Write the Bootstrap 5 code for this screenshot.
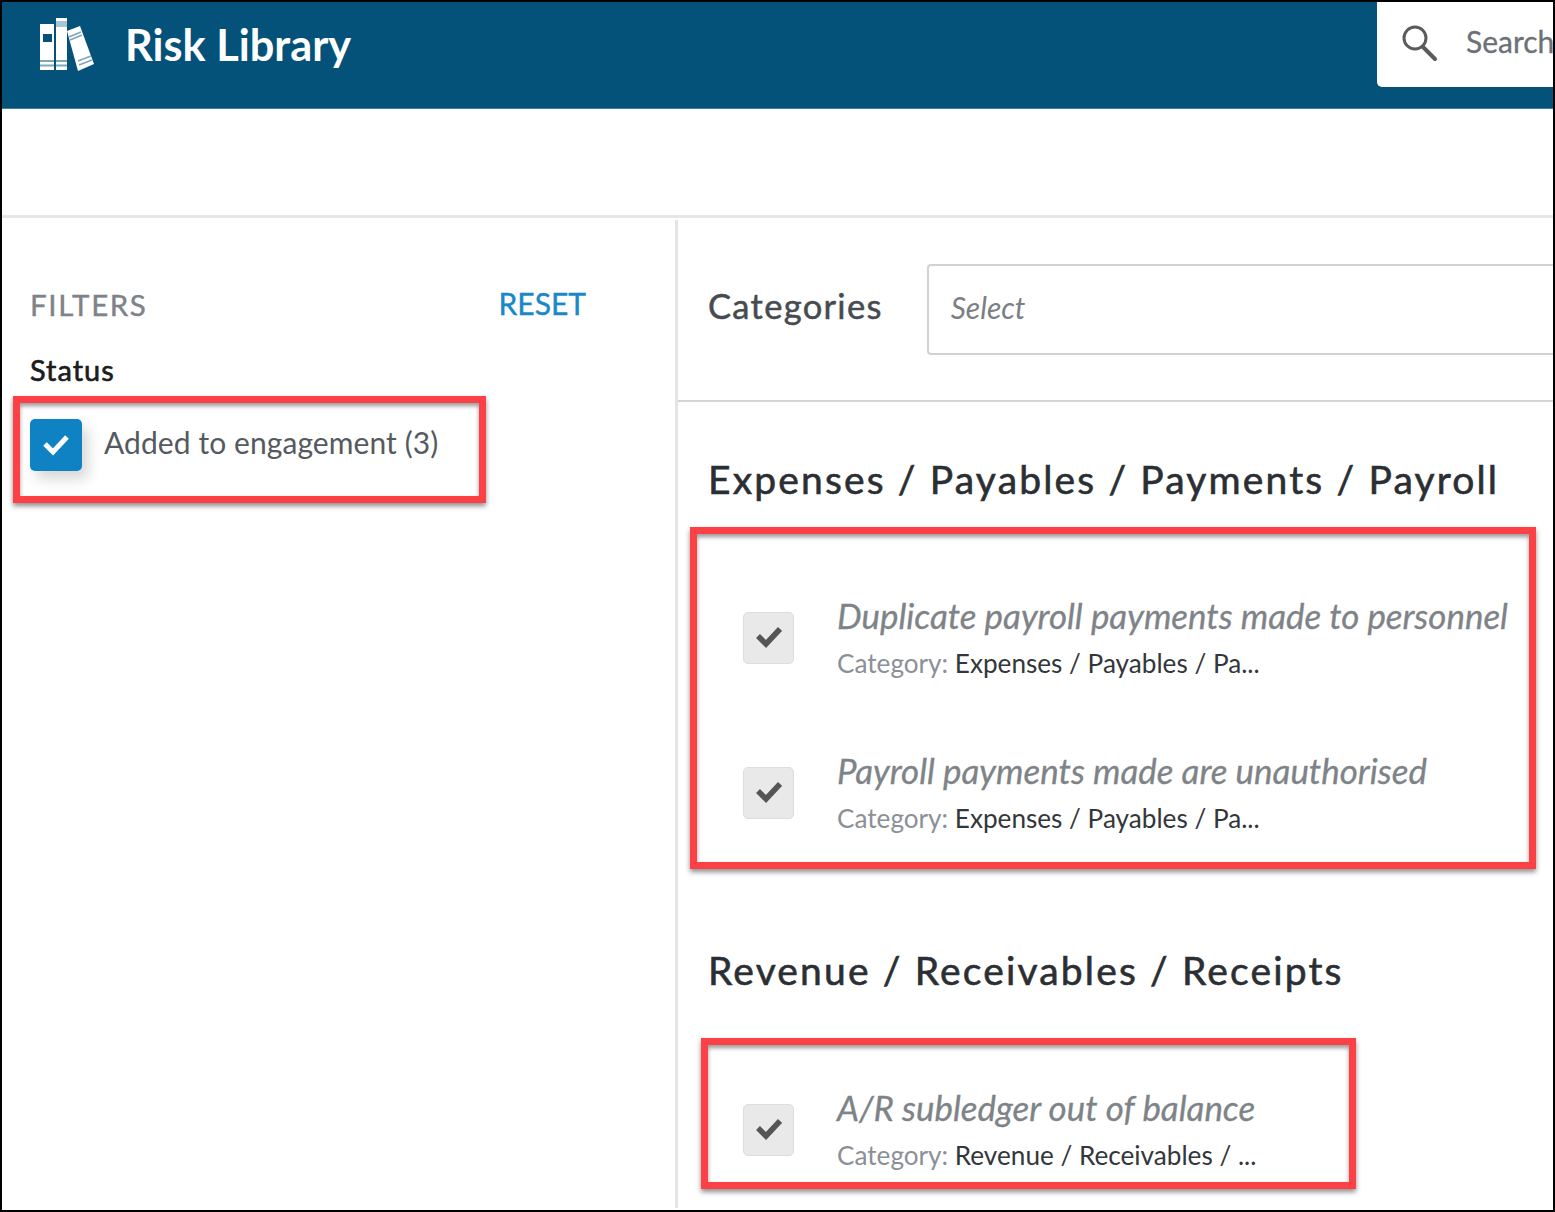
<!DOCTYPE html>
<html lang="en"><head><meta charset="utf-8"><title>Risk Library</title>
<link rel="stylesheet" href="https://cdn.jsdelivr.net/npm/bootstrap@5.3.0/dist/css/bootstrap.min.css">
<style>
html,body{height:100%;margin:0;overflow:hidden;background:#fff}
body{font-family:Lato,"Liberation Sans",sans-serif;color:#333}
.frame{width:1555px;height:1212px;border:2px solid #000;position:relative;overflow:hidden;background:#fff}
.topbar{height:107px;background:#04527a;border-bottom:1px solid #3f7fa0;padding-left:38px;padding-bottom:21px}
.brand-name{font-size:43.3px;font-weight:700;color:#fff;margin-left:31px;line-height:1}
.searchbox{width:176px;height:85px;background:#fff;border-radius:0 0 0 5px;padding:0 0 4px 24px;align-self:flex-start;overflow:hidden;white-space:nowrap}
.searchbox svg{flex:none}
.searchbox span{flex:none;font-size:30px;color:#6b7177;margin-left:27px;margin-top:-2px;-webkit-text-stroke:.3px #6b7177}
.subbar{height:109px;border-bottom:3px solid #e6e6e6}
.sidepane{width:676px;height:988px;margin-top:2px;border-right:3px solid #e4e4e4;padding:67px 89px 0 28px;flex:none}
.filt-title{font-size:29.5px;color:#7d8388;line-height:36px;letter-spacing:1.6px;-webkit-text-stroke:.4px #7d8388}
.reset{font-size:30px;color:#1a87c8;text-decoration:none;line-height:36px;margin-top:-2px;-webkit-text-stroke:.4px #1a87c8}
.status{font-size:29px;color:#1c1c1c;line-height:36px;margin-top:29px;-webkit-text-stroke:.6px #1c1c1c;letter-spacing:1px}
.tickbox{width:52px;height:52px;border-radius:5px;display:flex;align-items:center;justify-content:center;flex:none}
.tick-on{background:#0f82c4;box-shadow:6px 8px 14px rgba(0,0,0,.16)}
.tick-off{background:#e9e9e9;border:1px solid #dcdde0}
.status-row{margin-top:31px;gap:22px;font-size:30px;color:#555a60}
.status-row span{margin-top:-6px;letter-spacing:.08px}
.mainpane{flex:1;min-width:0;margin-top:2px}
.catrow{height:182px;border-bottom:2px solid #d4d4d4;padding:44px 0 0 30px}
.catlabel{font-size:34.5px;color:#454b50;letter-spacing:1.3px;line-height:44px;margin-top:20px;-webkit-text-stroke:.5px #454b50}
.catinput{flex:1;height:91px;margin-left:44px;border:2px solid #d2d2d2;border-right:0;border-radius:4px 0 0 4px;font-size:30px;font-style:italic;color:#7b8085;padding:19px 22px}
.groups{padding-left:30px}
.grp-title{font-size:39px;color:#2b2f33;letter-spacing:2.15px;line-height:48px;-webkit-text-stroke:.6px #2b2f33}
.grp-first{margin-top:53px;margin-bottom:57px}
.grp-second{margin-top:76px;margin-bottom:58px}
.riskitem{gap:43px;padding-left:35px;height:155px;align-items:center}
.tick-off{width:51px}
.risk-text{margin-top:-2px}
.risk-name{font-size:34.9px;font-style:italic;color:#7e8388;line-height:44px;white-space:nowrap;-webkit-text-stroke:.3px #7e8388}
.risk-cat{font-size:26.15px;color:#8b9096;line-height:34px;white-space:nowrap;margin-top:8px}
.risk-cat b{font-weight:400;color:#33373b}
.redbox{position:absolute;border:7px solid #fb4145;box-shadow:0 3px 5px rgba(0,0,0,.45),inset 0 3px 4px rgba(0,0,0,.4);pointer-events:none}
.red-a{left:11px;top:394px;width:473px;height:107px}
.red-b{left:688px;top:525px;width:846px;height:342px}
.red-c{left:699px;top:1036px;width:655px;height:151px}
</style></head><body>
<div class="frame">
 <div class="topbar d-flex align-items-center">
  <svg width="54" height="54" viewBox="0 0 54 54">
   <rect x="0" y="6" width="14" height="46" fill="#fff"/>
   <rect x="3" y="16" width="9" height="8" fill="#04527a"/>
   <rect x="16" y="0" width="11" height="52" fill="#fff"/>
   <rect x="16" y="3" width="11" height="6" fill="#a9c5d3"/>
   <path d="M27 13L40 8 54 46 38 53z" fill="#fff"/>
   <path d="M0 43h14M16 43h11M0 47.5h14M16 47.5h11" stroke="#7fa6ba" stroke-width="2"/>
   <path d="M29 19l12-5M30 22l12-5M39 47l13-5M38 43l13-5" stroke="#7fa6ba" stroke-width="1.6"/>
  </svg>
  <div class="brand-name">Risk Library</div>
  <div class="searchbox d-flex align-items-center ms-auto">
   <svg width="38" height="38" viewBox="0 0 38 38" fill="none" stroke="#5b5b5b" stroke-width="3"><circle cx="14" cy="14" r="11"/><path d="M22 23l12 12" stroke-width="4" stroke-linecap="round"/></svg>
   <span>Search</span>
  </div>
 </div>
 <div class="subbar"></div>
 <div class="d-flex">
  <aside class="sidepane">
   <div class="d-flex justify-content-between align-items-start"><div class="filt-title">FILTERS</div><a class="reset" href="#">RESET</a></div>
   <div class="status">Status</div>
   <div class="status-row d-flex align-items-center"><div class="tickbox tick-on"><svg width="26" height="22" viewBox="0 0 26 22" fill="none" stroke="#fff" stroke-width="5"><path d="M2 10l8 8L24 3"/></svg></div><span>Added to engagement (3)</span></div>
  </aside>
  <main class="mainpane">
   <div class="catrow d-flex align-items-start"><div class="catlabel">Categories</div><div class="catinput">Select</div></div>
   <div class="groups">
    <div class="grp-title grp-first">Expenses / Payables / Payments / Payroll</div>
    <div class="riskitem d-flex"><div class="tickbox tick-off"><svg width="26" height="22" viewBox="0 0 26 22" fill="none" stroke="#555" stroke-width="5.5"><path d="M2 9l8 8L24 2"/></svg></div><div class="risk-text"><div class="risk-name">Duplicate payroll payments made to personnel</div><div class="risk-cat">Category: <b>Expenses / Payables / Pa...</b></div></div></div>
    <div class="riskitem d-flex"><div class="tickbox tick-off"><svg width="26" height="22" viewBox="0 0 26 22" fill="none" stroke="#555" stroke-width="5.5"><path d="M2 9l8 8L24 2"/></svg></div><div class="risk-text"><div class="risk-name">Payroll payments made are unauthorised</div><div class="risk-cat">Category: <b>Expenses / Payables / Pa...</b></div></div></div>
    <div class="grp-title grp-second">Revenue / Receivables / Receipts</div>
    <div class="riskitem d-flex"><div class="tickbox tick-off"><svg width="26" height="22" viewBox="0 0 26 22" fill="none" stroke="#555" stroke-width="5.5"><path d="M2 9l8 8L24 2"/></svg></div><div class="risk-text"><div class="risk-name">A/R subledger out of balance</div><div class="risk-cat">Category: <b>Revenue / Receivables / ...</b></div></div></div>
   </div>
  </main>
 </div>
 <div class="redbox red-a"></div>
 <div class="redbox red-b"></div>
 <div class="redbox red-c"></div>
</div>
<script src="https://cdn.jsdelivr.net/npm/bootstrap@5.3.0/dist/js/bootstrap.bundle.min.js"></script>
</body></html>
